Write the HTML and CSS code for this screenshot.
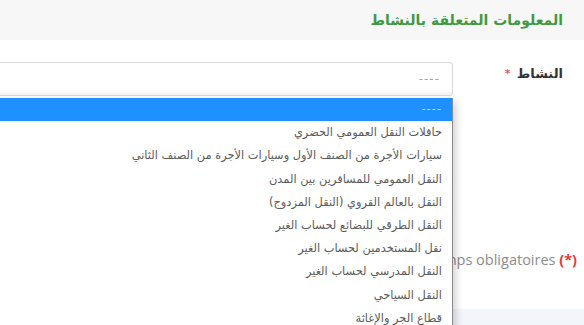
FILE: index.html
```html
<!DOCTYPE html>
<html lang="ar" dir="rtl">
<head>
<meta charset="utf-8">
<link rel="stylesheet" href="styles.css">
</head>
<body>
<div class="page">
  <div class="header"><h2 class="title">المعلومات المتعلقة بالنشاط</h2></div>
  <div class="form-row">
    <label class="label">النشاط <span class="star">*</span></label>
    <div class="select-wrap">
      <div class="select">----</div>
      <ul class="dropdown">
        <li class="opt active">----</li>
        <li class="opt">حافلات النقل العمومي الحضري</li>
        <li class="opt">سيارات الأجرة من الصنف الأول وسيارات الأجرة من الصنف الثاني</li>
        <li class="opt">النقل العمومي للمسافرين بين المدن</li>
        <li class="opt">النقل بالعالم القروي (النقل المزدوج)</li>
        <li class="opt">النقل الطرقي للبضائع لحساب الغير</li>
        <li class="opt">نقل المستخدمين لحساب الغير</li>
        <li class="opt">النقل المدرسي لحساب الغير</li>
        <li class="opt">النقل السياحي</li>
        <li class="opt">قطاع الجر والإغاثة</li>
      </ul>
    </div>
  </div>
  <div class="note" dir="ltr">Champs obligatoires <span class="req">(*)</span></div>
  <div class="band"></div>
</div>
</body>
</html>
```
FILE: styles.css
```css
html, body {
  margin: 0;
  padding: 0;
  background: #ffffff;
}
.page {
  position: relative;
  width: 584px;
  height: 325px;
  overflow: hidden;
  font-family: "DejaVu Sans", "Noto Sans", sans-serif;
}
.header {
  height: 40px;
  background: #f7f7f7;
  display: flex;
  align-items: center;
  padding-right: 21px;
}
.title {
  margin: 0;
  font-size: 14px;
  font-weight: bold;
  color: #3f9a3f;
}
.form-row {
  display: flex;
  align-items: flex-start;
  margin-top: 22px;
  padding-right: 21px;
}
.label {
  width: 110px;
  flex: none;
  font-size: 13px;
  font-weight: bold;
  color: #333333;
  line-height: 24px;
}
.star {
  color: #e8575a;
  font-size: 10px;
  vertical-align: top;
  margin-right: 2px;
}
.select-wrap {
  position: relative;
  flex: 1;
  margin-left: -10px;
}
.select {
  height: 34px;
  box-sizing: border-box;
  border: 1px solid #d9d9d9;
  border-radius: 3px;
  padding: 0 12px;
  line-height: 32px;
  font-size: 12px;
  color: #a8a8a8;
  letter-spacing: 1px;
  box-shadow: inset 0 -6px 6px -4px #f0f0f0;
}
.dropdown {
  position: absolute;
  top: 36px;
  right: 0;
  left: 0;
  margin: 0;
  padding: 0;
  list-style: none;
  background: #ffffff;
  border-right: 1px solid #8a8a8a;
  box-shadow: 3px 3px 8px rgba(0,0,0,0.18);
  height: 300px;
  z-index: 5;
}
.opt {
  height: 23.2px;
  line-height: 23px;
  padding: 0 10px;
  font-size: 11.4px;
  color: #5a5a5a;
  white-space: nowrap;
}
.opt.active {
  background: #1e90ff;
  color: #b8d8ff;
  letter-spacing: 1px;
}
.note {
  text-align: right;
  margin-top: 154px;
  padding-right: 7px;
  font-family: "Open Sans", sans-serif;
  font-size: 14.5px;
  color: #8c8c8c;
}
.req {
  color: #e53935;
  font-weight: bold;
}
.band {
  margin-top: 40px;
  height: 20px;
  background: #f2f5f9;
}
```
